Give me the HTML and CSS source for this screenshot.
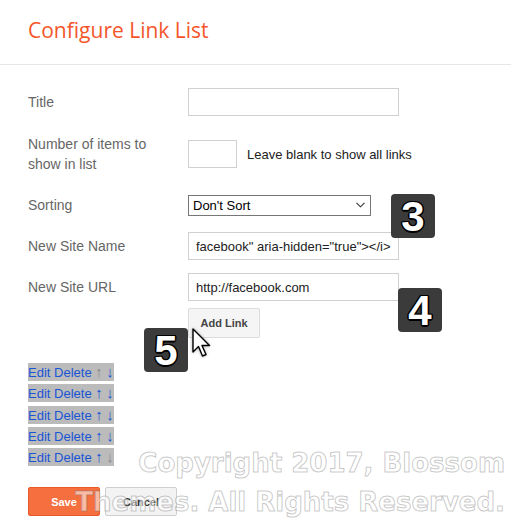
FILE: index.html
```html
<!DOCTYPE html>
<html>
<head>
<meta charset="utf-8">
<link rel="stylesheet" href="styles.css">
</head>
<body>
<div class="page">
  <header class="header"><h1 class="title">Configure Link List</h1></header>
  <form class="form">
    <div class="row">
      <label class="label">Title</label>
      <input class="input" type="text">
    </div>
    <div class="row row-number">
      <label class="label">Number of items to<br>show in list</label>
      <input class="input input-small" type="text">
      <span class="hint">Leave blank to show all links</span>
    </div>
    <div class="row">
      <label class="label">Sorting</label>
      <div class="select"><span>Don't Sort</span>
        <svg class="chev" width="9" height="6" viewBox="0 0 9 6"><path d="M0.5 0.8 L4.5 4.8 L8.5 0.8" fill="none" stroke="#333" stroke-width="1.1"/></svg>
      </div>
    </div>
    <div class="row">
      <label class="label">New Site Name</label>
      <div class="input input-text"><span>facebook" aria-hidden="true"&gt;&lt;/i&gt;</span></div>
    </div>
    <div class="row">
      <label class="label">New Site URL</label>
      <div class="input input-text"><span>http://facebook.com</span></div>
    </div>
    <div class="row row-btn">
      <span class="label"></span>
      <button type="button" class="btn">Add Link</button>
    </div>
    <div class="links">
      <div class="link-row"><a>Edit</a> <a>Delete</a> <span class="arrow off">↑</span> <a class="arrow">↓</a></div>
      <div class="link-row"><a>Edit</a> <a>Delete</a> <a class="arrow">↑</a> <a class="arrow">↓</a></div>
      <div class="link-row"><a>Edit</a> <a>Delete</a> <a class="arrow">↑</a> <a class="arrow">↓</a></div>
      <div class="link-row"><a>Edit</a> <a>Delete</a> <a class="arrow">↑</a> <a class="arrow">↓</a></div>
      <div class="link-row"><a>Edit</a> <a>Delete</a> <a class="arrow">↑</a> <span class="arrow off">↓</span></div>
    </div>
    <div class="actions">
      <button type="button" class="btn btn-save">Save</button>
      <button type="button" class="btn btn-cancel">Cancel</button>
    </div>
  </form>

  <div class="badge badge-3">3</div>
  <div class="badge badge-4">4</div>
  <div class="badge badge-5">5</div>
  <svg class="cursor" width="24" height="34" viewBox="0 0 24 34">
    <path d="M2 1 L2 24 L7.5 18.5 L11.5 28 L15 26.5 L11 17.5 L18.5 17.5 Z" fill="#fff" stroke="#000" stroke-width="1.4" stroke-linejoin="round"/>
  </svg>
  <div class="watermark">Copyright 2017, Blossom<br>Themes. All Rights Reserved.</div>
</div>
</body>
</html>
```

FILE: styles.css
```css
* { box-sizing: border-box; }
html, body { margin: 0; padding: 0; background: #fff; }
body { font-family: "Liberation Sans", Arial, sans-serif; }
.page { position: relative; width: 511px; height: 526px; overflow: hidden; }

.header { height: 65px; padding: 15px 28px 0; border-bottom: 1px solid #e6e6e6; }
.title { margin: 0; font-family: "Open Sans", sans-serif; font-weight: 400; font-size: 21px; line-height: 30px; color: #f4562a; }

.form { padding: 23px 0 0 28px; display: flex; flex-direction: column; }
.row { display: flex; align-items: center; min-height: 28px; margin-bottom: 13px; }
.row-number { margin-top: 5px; margin-bottom: 17px; }
.row-btn { margin-top: -6px; margin-bottom: 0; }
.label { width: 160px; flex: none; font-size: 14px; line-height: 20px; color: #666; }

.input { width: 211px; height: 28px; border: 1px solid #d0d0d0; background: #fff; margin: 0; padding: 0 7px; font-family: "Liberation Sans", Arial, sans-serif; font-size: 13px; color: #222; }
.input-small { width: 49px; height: 28px; }
.input-text { display: flex; align-items: center; overflow: hidden; white-space: nowrap; }
.hint { margin-left: 10px; font-size: 13px; color: #222; }

.select { width: 183px; height: 21px; border: 1px solid #767676; display: flex; align-items: center; justify-content: space-between; padding: 0 5px 0 4px; font-size: 13px; color: #000; }
.chev { flex: none; }

.btn { font-family: "Liberation Sans", Arial, sans-serif; font-weight: bold; font-size: 11px; height: 30px; width: 72px; padding: 0; border: 1px solid #dcdcdc; border-radius: 2px; background: #f5f5f5; color: #444; }

.links { margin-top: 25px; display: flex; flex-direction: column; align-items: flex-start; gap: 3.3px; }
.link-row { background: #bbb; font-size: 13px; line-height: 18px; height: 18px; color: #1a55d6; white-space: nowrap; }
.link-row a { color: #1a55d6; }
.arrow { font-size: 15px; }
.link-row .off { color: #8a8a8a; }

.actions { display: flex; gap: 5px; margin-top: 21px; }
.btn-save { width: 72px; height: 29px; background: #f6703f; border-color: #e65a26; color: #fff; }
.btn-cancel { width: 72px; height: 29px; background: #f3f3f3; border-color: #cfcfcf; color: #333; }

.badge { position: absolute; width: 44px; height: 44px; border-radius: 4px; background: #3b3b3b; color: #fff; font-family: "Liberation Sans", Arial, sans-serif; font-weight: bold; font-size: 42px; line-height: 46px; text-align: center;
  text-shadow: -1.5px 0 #000, 1.5px 0 #000, 0 -1.5px #000, 0 1.5px #000, -1px -1px #000, 1px 1px #000, -1px 1px #000, 1px -1px #000; }
.badge-3 { left: 391px; top: 194px; }
.badge-4 { left: 398px; top: 288px; }
.badge-5 { left: 144px; top: 328px; }
.cursor { position: absolute; left: 191px; top: 328px; filter: drop-shadow(0 0 1.5px rgba(0,0,0,0.35)); }

.watermark { position: absolute; right: 6px; top: 444px; text-align: right; font-family: "DejaVu Sans", Verdana, sans-serif; font-weight: bold; font-size: 26px; line-height: 39px; white-space: nowrap; color: rgba(255,255,255,0.55); -webkit-text-stroke: 1px rgba(110,110,110,0.38); }
```
